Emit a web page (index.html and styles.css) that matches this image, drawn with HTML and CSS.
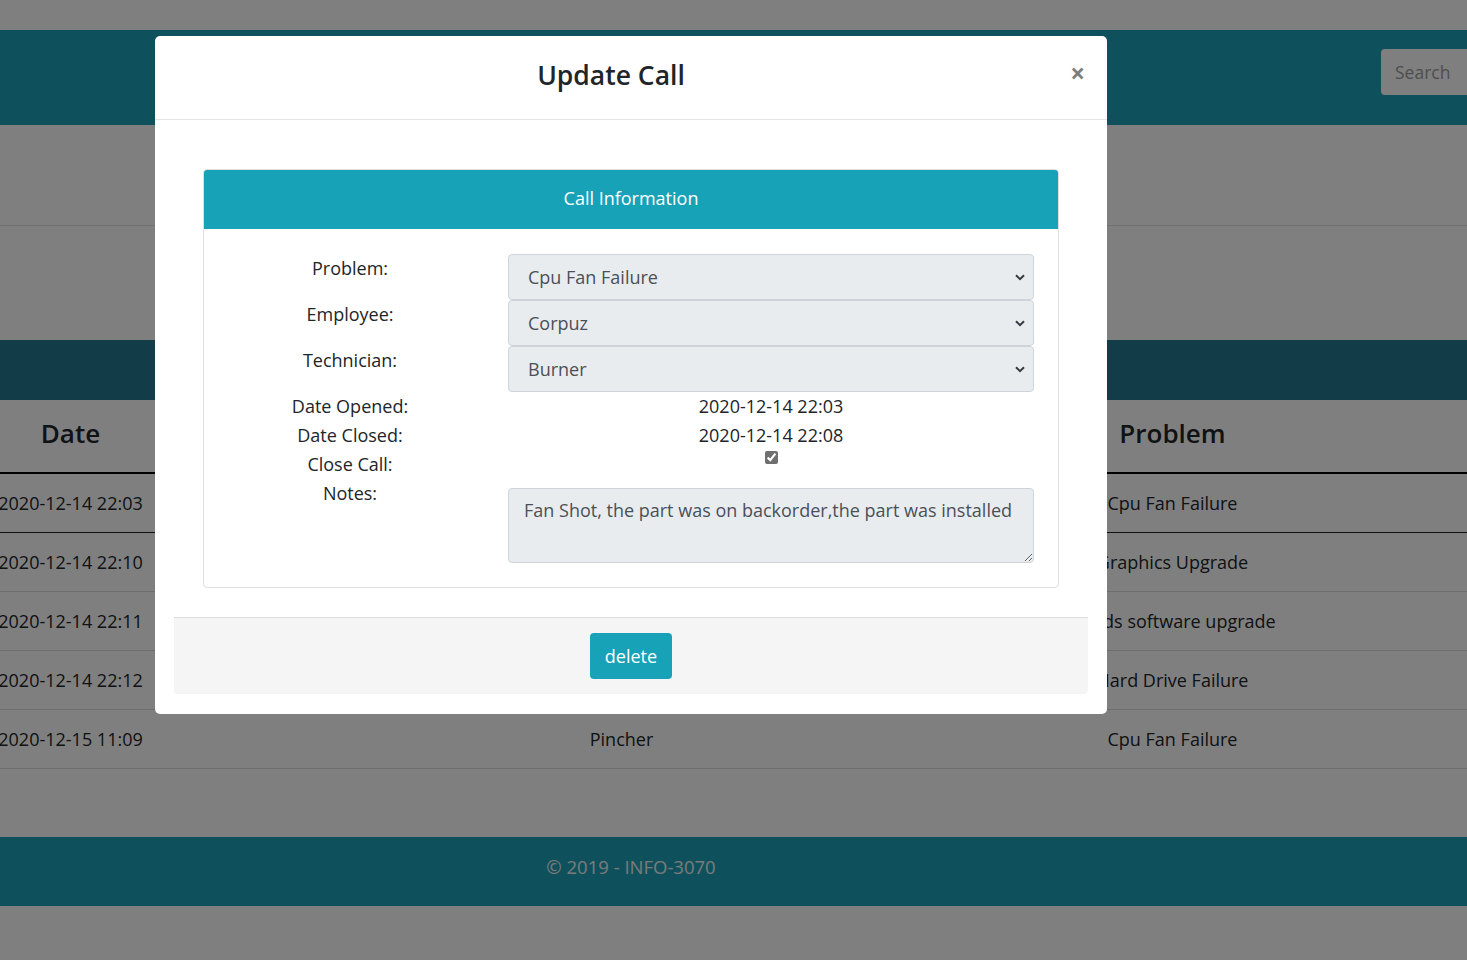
FILE: index.html
```html
<!DOCTYPE html>
<html lang="en">
<head>
<meta charset="utf-8">
<title>Calls</title>
<link rel="stylesheet" href="styles.css">
</head>
<body>
<div class="page">
  <header class="navbar">
    <button class="search-btn" type="button">Search</button>
  </header>
  <section class="intro"></section>
  <div class="spacer"></div>
  <div class="table-band"></div>
  <div class="calls-table">
    <div class="trow thead"><div>Date</div><div>Technician</div><div>Problem</div><div></div></div>
    <div class="trow first"><div>2020-12-14 22:03</div><div>Burner</div><div>Cpu Fan Failure</div><div></div></div>
    <div class="trow"><div>2020-12-14 22:10</div><div>Burner</div><div>Graphics Upgrade</div><div></div></div>
    <div class="trow"><div>2020-12-14 22:11</div><div>Pincher</div><div>Needs software upgrade</div><div></div></div>
    <div class="trow"><div>2020-12-14 22:12</div><div>Burner</div><div>Hard Drive Failure</div><div></div></div>
    <div class="trow"><div>2020-12-15 11:09</div><div>Pincher</div><div>Cpu Fan Failure</div><div></div></div>
  </div>
  <footer class="site-footer">
    <div class="footer-inner">&copy; 2019 - INFO-3070</div>
  </footer>
</div>

<div class="backdrop"></div>
<div class="modal" role="dialog">
  <div class="modal-dialog">
    <div class="modal-content">
      <div class="modal-header">
        <h5 class="modal-title">Update Call</h5>
        <button class="close" type="button">&times;</button>
      </div>
      <div class="modal-body">
        <div class="card">
          <div class="card-header">Call Information</div>
          <div class="card-body">
            <div class="labels">
              <div class="lbl tall">Problem:</div>
              <div class="lbl tall">Employee:</div>
              <div class="lbl tall">Technician:</div>
              <div class="lbl">Date Opened:</div>
              <div class="lbl">Date Closed:</div>
              <div class="lbl">Close Call:</div>
              <div class="lbl">Notes:</div>
            </div>
            <div class="controls">
              <div class="select-wrap">
                <select class="select"><option>Cpu Fan Failure</option></select>
                <svg class="chev" width="10" height="7" viewBox="0 0 10 7"><path d="M1 1.2 L5 5.2 L9 1.2" fill="none" stroke="#343a40" stroke-width="2"/></svg>
              </div>
              <div class="select-wrap">
                <select class="select"><option>Corpuz</option></select>
                <svg class="chev" width="10" height="7" viewBox="0 0 10 7"><path d="M1 1.2 L5 5.2 L9 1.2" fill="none" stroke="#343a40" stroke-width="2"/></svg>
              </div>
              <div class="select-wrap">
                <select class="select"><option>Burner</option></select>
                <svg class="chev" width="10" height="7" viewBox="0 0 10 7"><path d="M1 1.2 L5 5.2 L9 1.2" fill="none" stroke="#343a40" stroke-width="2"/></svg>
              </div>
              <div class="value">2020-12-14 22:03</div>
              <div class="value">2020-12-14 22:08</div>
              <div class="check-row"><input class="check" type="checkbox" checked></div>
              <textarea class="notes" readonly>Fan Shot, the part was on backorder,the part was installed</textarea>
            </div>
          </div>
        </div>
      </div>
      <div class="modal-footer">
        <button class="btn-delete" type="button">delete</button>
      </div>
    </div>
  </div>
</div>
</body>
</html>
```
FILE: styles.css
```css
* { box-sizing: border-box; }
html, body { margin: 0; padding: 0; }
body {
  font-family: "Open Sans", "Noto Sans", sans-serif;
  font-size: 18px;
  color: #212529;
  background: #fff;
}
.page {
  width: 1467px;
  height: 960px;
  overflow: hidden;
}
.navbar {
  margin-top: 30px;
  height: 95px;
  background: #1ca2b8;
  display: flex;
  justify-content: flex-end;
  align-items: flex-start;
}
.search-btn {
  margin-top: 19px;
  margin-right: -20px;
  width: 106px;
  height: 46px;
  border: none;
  border-radius: 4px;
  background: #fff;
  color: #9c9c9c;
  font-family: inherit;
  font-size: 17.5px;
  text-align: left;
  padding-left: 14px;
}
.intro {
  height: 101px;
  border-bottom: 1px solid #dee2e6;
}
.spacer { height: 114px; }
.table-band {
  height: 60px;
  background: #247890;
}
.calls-table {
  width: calc(100% + 205px);
  margin-left: -205px;
}
.trow {
  display: grid;
  grid-template-columns: 551px 551px 551px 1fr;
  align-items: center;
  text-align: center;
  height: 59px;
  border-bottom: 1px solid #dcdcdc;
  white-space: nowrap;
}
.trow.thead {
  height: 74px;
  padding-bottom: 7px;
  border-bottom: 2px solid #000;
  font-size: 26px;
  font-weight: 600;
}
.trow.first { border-bottom-color: #222; }
.site-footer {
  margin-top: 68px;
  height: 69px;
  background: #1ca2b8;
}
.footer-inner {
  width: 1262px;
  text-align: center;
  line-height: 60px;
  color: #f4f4f4;
  font-size: 18.5px;
}

.backdrop {
  position: fixed;
  inset: 0;
  background: rgba(0, 0, 0, 0.5);
}
.modal {
  position: fixed;
  inset: 0;
}
.modal-dialog {
  width: 952px;
  margin: 36px 0 0 155px;
}
.modal-content {
  background: #fff;
  border-radius: 5px;
  padding-bottom: 20px;
}
.modal-header {
  height: 84px;
  border-bottom: 1px solid #e5e5e5;
  display: flex;
  align-items: center;
  padding: 0 16px;
}
.modal-title {
  flex: 1;
  margin: 0;
  text-align: center;
  font-size: 26.5px;
  font-weight: 600;
  line-height: 1.2;
  color: #212529;
  padding-bottom: 4px;
}
.close {
  width: 40px;
  border: none;
  background: none;
  padding: 0 6px 10px 0;
  text-align: right;
  font-family: inherit;
  font-size: 26px;
  font-weight: 700;
  color: #000;
  opacity: 0.5;
}
.modal-body {
  padding: 49px 48px 29px;
}
.card {
  border: 1px solid #dfdfdf;
  border-radius: 4px;
  overflow: hidden;
}
.card-header {
  height: 59px;
  line-height: 57px;
  background: #17a2b8;
  color: #fff;
  text-align: center;
  font-size: 18px;
}
.card-body {
  display: grid;
  grid-template-columns: 292px 526px;
  column-gap: 12px;
  padding: 25px 24px 24px 0;
}
.labels { text-align: center; }
.lbl {
  height: 29px;
  line-height: 29px;
}
.lbl.tall { height: 46px; }
.controls {
  display: flex;
  flex-direction: column;
  text-align: center;
}
.select-wrap {
  position: relative;
  height: 46px;
}
.select {
  appearance: none;
  -webkit-appearance: none;
  width: 100%;
  height: 46px;
  border: 1px solid #ced4da;
  border-radius: 4px;
  background: #e9ecef;
  color: #495057;
  font-family: inherit;
  font-size: 18px;
  padding: 0 19px;
}
.chev {
  position: absolute;
  right: 9px;
  top: 20px;
}
.value {
  height: 29px;
  line-height: 29px;
}
.check-row {
  height: 38px;
  display: flex;
  justify-content: center;
  align-items: flex-start;
}
.check {
  margin: 1px 0 0;
  width: 13px;
  height: 13px;
  accent-color: #6f6f6f;
}
.notes {
  width: 526px;
  height: 75px;
  border: 1px solid #ced4da;
  border-radius: 4px;
  background: #e9ecef;
  color: #495057;
  font-family: inherit;
  font-size: 18px;
  line-height: 27px;
  padding: 8px 15px;
  margin: 0;
  display: block;
}
.modal-footer {
  margin: 0 19px;
  background: #f5f5f5;
  border-top: 1px solid #dddddd;
  border-radius: 0 0 4px 4px;
  padding: 15px;
  text-align: center;
}
.btn-delete {
  height: 46px;
  padding: 0 15px;
  border: none;
  border-radius: 4px;
  background: #17a2b8;
  color: #fff;
  font-family: inherit;
  font-size: 18px;
}
```
